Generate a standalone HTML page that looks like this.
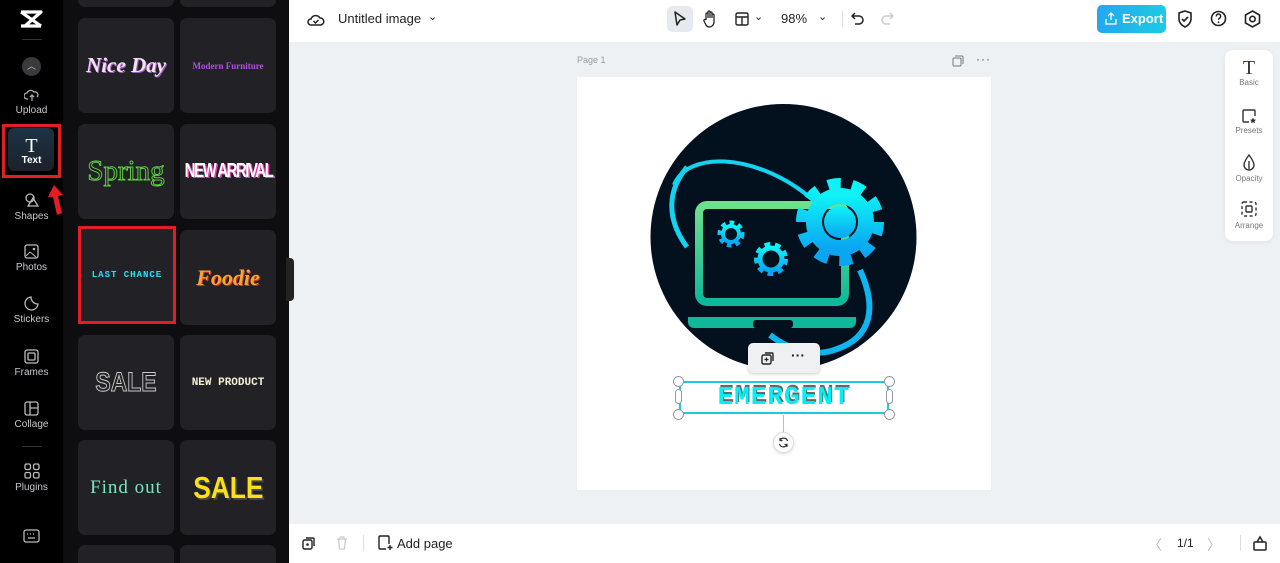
<!DOCTYPE html>
<html style="width:1280px;height:563px;overflow:hidden"><head><style>
*{margin:0;padding:0;box-sizing:border-box}
body{width:1280px;height:563px;overflow:hidden;font-family:"Liberation Sans",sans-serif;background:#eef1f4;position:relative}
.abs{position:absolute}
.rail{left:0;top:0;width:63px;height:563px;background:#000}
.panel{left:63px;top:0;width:226px;height:563px;background:#0e0e10;overflow:hidden}
.card{position:absolute;width:96px;height:95px;background:#222226;border-radius:7px;display:flex;align-items:center;justify-content:center;text-align:center}
.ri{position:absolute;left:0;width:63px;text-align:center;color:#c8c8cc;font-size:10px}
.ri svg{display:block;margin:0 auto 3px}
.top{left:289px;top:0;width:991px;height:42px;background:#fff}
.bot{left:289px;top:524px;width:991px;height:39px;background:#fff}
.tx{font-size:13px;color:#222}
</style></head><body>
<div class="abs rail"></div>
<div class="abs panel">
<div class="card" style="left:15px;top:0;height:7px;border-radius:0 0 7px 7px"></div><div class="card" style="left:117px;top:0;height:7px;border-radius:0 0 7px 7px"></div>
<div class="card" style="left:15px;top:18px"><span style="font-family:'Liberation Serif';font-style:italic;font-weight:bold;font-size:21px;color:#f2dff0;text-shadow:1px 1px 0 #a45fc4">Nice Day</span></div>
<div class="card" style="left:117px;top:18px"><span style="font-family:'Liberation Serif';font-weight:bold;font-size:9px;color:#b050e0">Modern Furniture</span></div>
<div class="card" style="left:15px;top:124px"><span style="font-family:'Liberation Serif';font-size:29px;color:#1a1a1a;-webkit-text-stroke:1px #5fcf4a">Spring</span></div>
<div class="card" style="left:117px;top:124px"><span style="font-weight:bold;font-size:20px;color:#fff;letter-spacing:-2px;transform:scaleX(.75);display:inline-block;text-shadow:2px 1px 0 #e040b0;white-space:nowrap">NEW ARRIVAL</span></div>
<div class="card" style="left:15px;top:226px;border:3px solid #e21d25;border-radius:0;width:98px;height:98px"><span style="font-family:'Liberation Mono';font-weight:bold;font-size:9px;color:#1ee8f2;letter-spacing:1px">LAST CHANCE</span></div>
<div class="card" style="left:117px;top:230px"><span style="font-family:'Liberation Serif';font-style:italic;font-weight:bold;font-size:22px;color:#f7a531;text-shadow:1px 1px 0 #c5392a">Foodie</span></div>
<div class="card" style="left:15px;top:335px"><span style="font-weight:bold;font-size:27px;color:#222;-webkit-text-stroke:1px #ccc;transform:scaleX(.85);display:inline-block">SALE</span></div>
<div class="card" style="left:117px;top:335px"><span style="font-family:'Liberation Mono';font-weight:bold;font-size:11px;color:#f5f0d0">NEW PRODUCT</span></div>
<div class="card" style="left:15px;top:440px"><span style="font-family:'Liberation Serif';font-size:19px;color:#7ae6c0;letter-spacing:1px">Find out</span></div>
<div class="card" style="left:117px;top:440px"><span style="font-weight:bold;font-size:31px;color:#f9e01b;transform:scaleX(.85);display:inline-block;text-shadow:2px 2px 0 #444">SALE</span></div>
<div class="card" style="left:15px;top:545px;height:18px;border-radius:7px 7px 0 0"></div><div class="card" style="left:117px;top:545px;height:18px;border-radius:7px 7px 0 0"></div>
</div>
<!-- rail -->
<svg class="abs" style="left:19px;top:9px" width="24" height="20" viewBox="0 0 24 20"><path d="M2 3h20L6 17h16" stroke="#fff" stroke-width="3.2" fill="none" stroke-linejoin="round"/><path d="M2 3l20 14M2 17h4" stroke="#fff" stroke-width="3.2"/></svg>
<div class="abs" style="left:22px;top:39px;width:20px;height:1px;background:#333"></div>
<div class="abs" style="left:22px;top:57px;width:19px;height:19px;border-radius:50%;background:#3a3a3e;color:#bbb;font-size:9px;text-align:center;line-height:19px">︿</div>
<div class="ri" style="top:88px"><svg width="16" height="14" viewBox="0 0 16 14"><path d="M4 11H3a3 3 0 010-6 4 4 0 017-1 3 3 0 013 5M8 13V7M6 9l2-2 2 2" stroke="#aaa" fill="none" stroke-width="1.3"/></svg>Upload</div>
<div class="abs" style="left:2px;top:124px;width:59px;height:54px;border:3px solid #e21d25"></div>
<div class="abs" style="left:8px;top:128px;width:46px;height:43px;border-radius:6px;background:linear-gradient(#1d3346,#1b2129)"></div>
<div class="ri" style="top:137px;color:#fff;font-weight:bold"><span style="font-family:'Liberation Serif';font-size:20px;font-weight:normal;display:block;line-height:18px">T</span>Text</div>
<svg class="abs" style="left:46px;top:183px" width="22" height="36" viewBox="0 0 22 36"><path d="M8 2L2 14h5l4 18 5-2-4-17 5-1z" fill="#e21d25"/></svg>
<div class="ri" style="top:192px"><svg width="16" height="16" viewBox="0 0 16 16"><circle cx="6" cy="6" r="4" stroke="#bbb" fill="none" stroke-width="1.3"/><path d="M9 6l5 8H4z" stroke="#bbb" fill="none" stroke-width="1.3"/></svg>Shapes</div>
<div class="ri" style="top:244px"><svg width="15" height="15" viewBox="0 0 15 15"><rect x="1" y="1" width="13" height="13" rx="2" stroke="#bbb" fill="none" stroke-width="1.3"/><path d="M2 12l4-4 6 5" stroke="#bbb" fill="none"/><circle cx="10" cy="5" r="1.3" fill="#bbb"/></svg>Photos</div>
<div class="ri" style="top:296px"><svg width="15" height="15" viewBox="0 0 15 15"><path d="M14 8A6.5 6.5 0 117 1c0 4 3 7 7 7z" stroke="#bbb" fill="none" stroke-width="1.3"/></svg>Stickers</div>
<div class="ri" style="top:349px"><svg width="15" height="15" viewBox="0 0 15 15"><rect x="1" y="1" width="13" height="13" rx="2" stroke="#bbb" fill="none" stroke-width="1.3"/><rect x="4" y="4" width="7" height="7" rx="1" stroke="#bbb" fill="none" stroke-width="1.3"/></svg>Frames</div>
<div class="ri" style="top:401px"><svg width="15" height="15" viewBox="0 0 15 15"><rect x="1" y="1" width="13" height="13" rx="2" stroke="#bbb" fill="none" stroke-width="1.3"/><path d="M6 1v13M6 7h8" stroke="#bbb" stroke-width="1.3"/></svg>Collage</div>
<div class="abs" style="left:22px;top:446px;width:20px;height:1px;background:#333"></div>
<div class="ri" style="top:463px"><svg width="16" height="16" viewBox="0 0 16 16"><g stroke="#bbb" fill="none" stroke-width="1.3"><rect x="1" y="1" width="5.5" height="5.5" rx="1.5"/><rect x="9.5" y="1" width="5.5" height="5.5" rx="1.5"/><rect x="1" y="9.5" width="5.5" height="5.5" rx="1.5"/><rect x="9.5" y="9.5" width="5.5" height="5.5" rx="1.5"/></g></svg>Plugins</div>
<svg class="abs" style="left:23px;top:529px" width="17" height="14" viewBox="0 0 17 14"><rect x="1" y="1" width="15" height="12" rx="2" stroke="#bbb" fill="none" stroke-width="1.3"/><path d="M4 5h1M7 5h1M10 5h1M13 5h0M5 9h7" stroke="#bbb" stroke-width="1.3"/></svg>
<div class="abs" style="left:286px;top:258px;width:8px;height:43px;background:#222;border-radius:0 4px 4px 0"></div>
<!-- top bar -->
<div class="abs top"></div>
<svg class="abs" style="left:307px;top:11px" width="18" height="16" viewBox="0 0 18 16"><path d="M5 14H4a3 3 0 010-6 5 5 0 019-1 3.5 3.5 0 01.5 7z" stroke="#222" fill="none" stroke-width="1.5"/><path d="M6.5 10l2 2 3-3" stroke="#222" fill="none" stroke-width="1.5"/></svg>
<div class="abs tx" style="left:338px;top:11px">Untitled image</div>
<div class="abs tx" style="left:428px;top:10px;font-size:11px">⌄</div>
<div class="abs" style="left:667px;top:6px;width:26px;height:26px;background:#e6e9ee;border-radius:5px"></div>
<svg class="abs" style="left:673px;top:11px" width="14" height="16" viewBox="0 0 14 16"><path d="M2 1l10 7-5 1-3 5z" stroke="#222" fill="none" stroke-width="1.5" stroke-linejoin="round"/></svg>
<svg class="abs" style="left:702px;top:10px" width="16" height="18" viewBox="0 0 16 18"><path d="M4 10V4a1 1 0 012 0v4V2a1 1 0 012 0v6V3a1 1 0 012 0v5V5a1 1 0 012 0v7a5 5 0 01-5 5H7a4 4 0 01-3-2L2 11a1 1 0 012-1z" stroke="#222" fill="none" stroke-width="1.3"/></svg>
<svg class="abs" style="left:735px;top:12px" width="14" height="14" viewBox="0 0 14 14"><rect x="1" y="1" width="12" height="12" rx="1.5" stroke="#222" fill="none" stroke-width="1.4"/><path d="M1 5h12M7 5v8" stroke="#222" stroke-width="1.4"/></svg>
<div class="abs tx" style="left:754px;top:10px;font-size:11px">⌄</div>
<div class="abs tx" style="left:781px;top:11px">98%</div>
<div class="abs tx" style="left:818px;top:10px;font-size:11px">⌄</div>
<div class="abs" style="left:842px;top:11px;width:1px;height:16px;background:#ddd"></div>
<svg class="abs" style="left:851px;top:11px" width="14" height="15" viewBox="0 0 14 15"><path d="M4 2L1 5l3 3M1 5h7a4 4 0 010 8H4" stroke="#222" fill="none" stroke-width="1.5"/></svg>
<svg class="abs" style="left:880px;top:11px" width="14" height="15" viewBox="0 0 14 15"><path d="M10 2l3 3-3 3M13 5H6a4 4 0 000 8h4" stroke="#ccc" fill="none" stroke-width="1.5"/></svg>
<div class="abs" style="left:1097px;top:5px;width:69px;height:28px;border-radius:5px;background:linear-gradient(90deg,#25a6ef,#1ccbe3);color:#fff;font-weight:bold;font-size:13px;line-height:28px;padding-left:25px">Export</div>
<svg class="abs" style="left:1105px;top:12px" width="12" height="13" viewBox="0 0 12 13"><path d="M6 8V1M3 4l3-3 3 3M1 7v5h10V7" stroke="#fff" fill="none" stroke-width="1.3"/></svg>
<svg class="abs" style="left:1177px;top:10px" width="16" height="18" viewBox="0 0 16 18"><path d="M8 1l6 2v6c0 4-3 6.5-6 8-3-1.5-6-4-6-8V3z" stroke="#222" fill="none" stroke-width="1.6"/><path d="M5 9l2 2 4-4" stroke="#222" fill="none" stroke-width="1.6"/></svg>
<svg class="abs" style="left:1210px;top:10px" width="17" height="17" viewBox="0 0 17 17"><circle cx="8.5" cy="8.5" r="7" stroke="#222" fill="none" stroke-width="1.6"/><path d="M6.3 6.5a2.2 2.2 0 114 1c-.8.6-1.8 1-1.8 2.2" stroke="#222" fill="none" stroke-width="1.5"/><circle cx="8.5" cy="12.3" r=".9" fill="#222"/></svg>
<svg class="abs" style="left:1244px;top:10px" width="17" height="18" viewBox="0 0 17 18"><path d="M8.5 1l7 4v8l-7 4-7-4V5z" stroke="#222" fill="none" stroke-width="1.6"/><circle cx="8.5" cy="9" r="2.7" stroke="#222" fill="none" stroke-width="1.6"/></svg>
<!-- right panel -->
<div class="abs" style="left:1225px;top:50px;width:48px;height:191px;background:#fff;border-radius:8px;box-shadow:0 1px 6px rgba(0,0,0,.06)"></div>
<div class="abs" style="left:1225px;top:58px;width:48px;text-align:center;font-size:8px;color:#777"><span style="font-family:'Liberation Serif';font-size:20px;color:#333;display:block;line-height:20px">T</span>Basic</div>
<svg class="abs" style="left:1241px;top:108px" width="16" height="16" viewBox="0 0 16 16"><path d="M8 14H3a1 1 0 01-1-1V3a1 1 0 011-1h10a1 1 0 011 1v5" stroke="#333" fill="none" stroke-width="1.4"/><path d="M12 9.5l1 2 2 .3-1.5 1.4.4 2-1.9-1-1.9 1 .4-2L9 11.8l2-.3z" fill="#333"/></svg>
<div class="abs" style="left:1225px;top:126px;width:48px;text-align:center;font-size:8px;color:#777">Presets</div>
<svg class="abs" style="left:1242px;top:154px" width="14" height="17" viewBox="0 0 14 17"><path d="M7 1C4 5 2 8 2 11a5 5 0 0010 0c0-3-2-6-5-10z" stroke="#333" fill="none" stroke-width="1.4"/><path d="M7 7v8" stroke="#333" stroke-width="1.4"/></svg>
<div class="abs" style="left:1225px;top:174px;width:48px;text-align:center;font-size:8px;color:#777">Opacity</div>
<svg class="abs" style="left:1241px;top:201px" width="16" height="16" viewBox="0 0 16 16"><rect x="1" y="1" width="14" height="14" rx="2" stroke="#333" fill="none" stroke-width="1.4" stroke-dasharray="3 2.5"/><rect x="5" y="5" width="6" height="6" rx="1" stroke="#333" fill="none" stroke-width="1.4"/></svg>
<div class="abs" style="left:1225px;top:221px;width:48px;text-align:center;font-size:8px;color:#777">Arrange</div>
<!-- page -->
<div class="abs" style="left:577px;top:55px;font-size:9px;color:#999">Page 1</div>
<svg class="abs" style="left:952px;top:55px" width="12" height="12" viewBox="0 0 12 12"><rect x="1" y="3" width="8" height="8" rx="1" stroke="#777" fill="none"/><path d="M3 1h7a1 1 0 011 1v7" stroke="#777" fill="none"/></svg>
<div class="abs" style="left:976px;top:52px;font-size:12px;color:#555;letter-spacing:1px">···</div>
<div class="abs" style="left:577px;top:77px;width:414px;height:413px;background:#fff"></div>
<svg class="abs" style="left:577px;top:77px" width="414" height="413" viewBox="0 0 414 413">
<defs><linearGradient id="g1" x1="0" y1="0" x2="0" y2="1"><stop offset="0" stop-color="#6ee08c"/><stop offset="1" stop-color="#0fb89a"/></linearGradient>
<linearGradient id="g2" x1="0" y1="0" x2="0" y2="1"><stop offset="0" stop-color="#0ef2f5"/><stop offset="1" stop-color="#0aa6f2"/></linearGradient></defs>
<circle cx="206.5" cy="160" r="133" fill="#03101e"/>
<path d="M110 90C85 120 95 150 110 170" stroke="#13d3ee" stroke-width="5" fill="none"/>
<path d="M97 108C110 75 175 75 230 118" stroke="#13d3ee" stroke-width="4" fill="none"/>
<path d="M283 193C300 230 295 260 260 272C240 280 215 275 193 258" stroke="#10b5f0" stroke-width="6" fill="none"/>
<rect x="122" y="128" width="146" height="97" rx="8" stroke="url(#g1)" stroke-width="8" fill="none"/>
<path d="M111 240h168v5a6 6 0 01-6 6H117a6 6 0 01-6-6z" fill="#10b89a"/>
<rect x="176" y="243" width="40" height="8" rx="3" fill="#03101e"/>
<g fill="none" stroke="url(#g2)">
<circle cx="263" cy="145" r="33" stroke-width="22" stroke-dasharray="11 9.7"/>
<circle cx="263" cy="145" r="26" stroke-width="16"/>
<circle cx="154" cy="157" r="10" stroke-width="7" stroke-dasharray="4 3.6"/>
<circle cx="154" cy="157" r="8" stroke-width="4"/>
<circle cx="194" cy="182" r="13" stroke-width="8" stroke-dasharray="5 4.2"/>
<circle cx="194" cy="182" r="11" stroke-width="5"/>
</g>
<circle cx="263" cy="145" r="16" fill="url(#g2)"/>
</svg>
<div class="abs" style="left:748px;top:343px;width:72px;height:30px;background:#eef0f2;border-radius:5px;box-shadow:0 1px 3px rgba(0,0,0,.2)"></div>
<svg class="abs" style="left:761px;top:351px" width="14" height="14" viewBox="0 0 14 14"><rect x="1" y="4" width="9" height="9" rx="1.5" stroke="#222" fill="none" stroke-width="1.4"/><path d="M4 2h7a1 1 0 011 1v7" stroke="#222" fill="none" stroke-width="1.4"/><path d="M5.5 6.5v4M3.5 8.5h4" stroke="#222" stroke-width="1.2"/></svg>
<div class="abs" style="left:791px;top:347px;font-size:14px;font-weight:bold;color:#222">···</div>
<div class="abs" style="left:679px;top:381px;width:210px;height:33px;border:2px solid #22c7e0"></div>
<div class="abs" style="left:679px;top:383px;width:210px;text-align:center;font-family:'Liberation Mono',monospace;font-weight:bold;font-size:26px;line-height:28px;color:#00f0f8;letter-spacing:1px;text-shadow:1px -2px 0 #666">EMERGENT</div>
<div class="abs" style="left:673px;top:376px;width:11px;height:11px;border-radius:50%;background:#fff;border:1px solid #999"></div>
<div class="abs" style="left:884px;top:376px;width:11px;height:11px;border-radius:50%;background:#fff;border:1px solid #999"></div>
<div class="abs" style="left:673px;top:409px;width:11px;height:11px;border-radius:50%;background:#fff;border:1px solid #999"></div>
<div class="abs" style="left:884px;top:409px;width:11px;height:11px;border-radius:50%;background:#fff;border:1px solid #999"></div>
<div class="abs" style="left:675px;top:389px;width:7px;height:15px;border-radius:4px;background:#fff;border:1px solid #999"></div>
<div class="abs" style="left:886px;top:389px;width:7px;height:15px;border-radius:4px;background:#fff;border:1px solid #999"></div>
<div class="abs" style="left:783px;top:415px;width:1px;height:17px;background:#bbb"></div>
<div class="abs" style="left:773px;top:432px;width:21px;height:21px;border-radius:50%;background:#fff;border:1px solid #ddd;box-shadow:0 1px 3px rgba(0,0,0,.15)"></div>
<svg class="abs" style="left:778px;top:437px" width="11" height="11" viewBox="0 0 11 11"><path d="M9.5 4A4 4 0 002 3.5M1.5 7A4 4 0 009 7.5M2 1v2.5h2.5M9 10V7.5H6.5" stroke="#333" fill="none" stroke-width="1.2"/></svg>
<!-- bottom -->
<div class="abs bot"></div>
<svg class="abs" style="left:302px;top:536px" width="14" height="14" viewBox="0 0 14 14"><rect x="1" y="4" width="9" height="9" rx="1.5" stroke="#222" fill="none" stroke-width="1.4"/><path d="M4 2h7a1 1 0 011 1v7" stroke="#222" fill="none" stroke-width="1.4"/><circle cx="5.5" cy="8.5" r="1.3" fill="#222"/></svg>
<svg class="abs" style="left:336px;top:536px" width="12" height="14" viewBox="0 0 12 14"><path d="M1 3h10M4 3V1h4v2M2.5 3l1 10h5l1-10" stroke="#ccc" fill="none" stroke-width="1.3"/></svg>
<div class="abs" style="left:363px;top:535px;width:1px;height:16px;background:#ddd"></div>
<svg class="abs" style="left:377px;top:535px" width="16" height="16" viewBox="0 0 16 16"><path d="M9 14H3a1 1 0 01-1-1V2a1 1 0 011-1h8a1 1 0 011 1v7" stroke="#222" fill="none" stroke-width="1.4"/><path d="M13 10v5M10.5 12.5h5" stroke="#222" stroke-width="1.4"/></svg>
<div class="abs tx" style="left:397px;top:536px">Add page</div>
<div class="abs" style="left:1148px;top:535px;color:#bbb;font-size:14px">〈</div>
<div class="abs tx" style="left:1177px;top:536px;font-size:12px">1/1</div>
<div class="abs" style="left:1207px;top:535px;color:#bbb;font-size:14px">〉</div>
<div class="abs" style="left:1240px;top:535px;width:1px;height:16px;background:#ddd"></div>
<svg class="abs" style="left:1252px;top:535px" width="16" height="16" viewBox="0 0 16 16"><rect x="2" y="7" width="12" height="8" rx="1" stroke="#222" fill="none" stroke-width="1.5"/><path d="M5 7l3-5 3 5" stroke="#222" fill="none" stroke-width="1.5"/></svg>
</body></html>
